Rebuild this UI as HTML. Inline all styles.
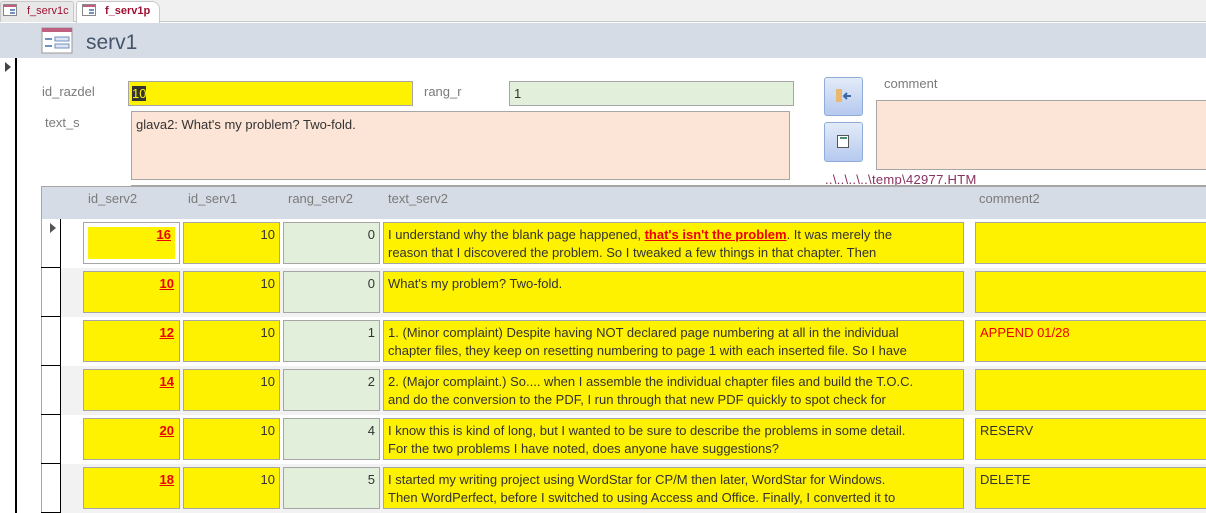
<!DOCTYPE html><html><head><style>
*{box-sizing:border-box;margin:0;padding:0}
body{width:1206px;height:513px;overflow:hidden;background:#fff;font-family:"Liberation Sans",sans-serif;font-size:13px;color:#333;position:relative}
.a{position:absolute}
.lbl{position:absolute;color:#7a7a7a;font-size:13px}
.box{position:absolute;border:1px solid #a6a6a6}
.y{background:#fff200}.g{background:#e2efda}.p{background:#fce4d6}
.cell{position:absolute;border:1px solid #a6a6a6;padding:3px 4px;line-height:18px;overflow:hidden}
.r{text-align:right}
.red{color:#e00;font-weight:bold;text-decoration:underline}
</style></head><body>
<div class="a" style="left:0;top:0;width:1206px;height:22px;background:#f0f0f0;border-bottom:1px solid #c8c8c8"></div>
<div class="a" style="left:0;top:1px;width:74px;height:21px;background:#e8e8e8;border:1px solid #c8c8c8;border-bottom:none;border-radius:3px 3px 0 0"></div>
<div class="a" style="left:76px;top:1px;width:84px;height:22px;background:#fff;border:1px solid #c8c8c8;border-bottom:none;border-radius:3px 8px 0 0"></div>
<svg class="a" style="left:3px;top:4px" width="14" height="12"><rect x="0.5" y="0.5" width="13" height="11" fill="#fff" stroke="#888"/><rect x="1" y="1" width="12" height="2" fill="#c06080"/><rect x="7" y="5" width="5" height="2" fill="#7090c0"/><rect x="7" y="8" width="5" height="2" fill="#7090c0"/></svg>
<div class="a" style="left:27px;top:5px;color:#a01030;font-size:11px">f_serv1c</div>
<svg class="a" style="left:82px;top:4px" width="14" height="12"><rect x="0.5" y="0.5" width="13" height="11" fill="#fff" stroke="#888"/><rect x="1" y="1" width="12" height="2" fill="#c06080"/><rect x="7" y="5" width="5" height="2" fill="#7090c0"/><rect x="7" y="8" width="5" height="2" fill="#7090c0"/></svg>
<div class="a" style="left:105px;top:5px;color:#a01030;font-size:11px;font-weight:bold">f_serv1p</div>
<div class="a" style="left:0;top:23px;width:1206px;height:35px;background:#d6dce5"></div>
<svg class="a" style="left:41px;top:27px" width="32" height="27"><rect x="1" y="1" width="30" height="25" fill="#fff" stroke="#999"/><rect x="1" y="1" width="30" height="4" fill="#c06080"/><rect x="14" y="10" width="14" height="4" fill="#dde6f2" stroke="#7090c0"/><rect x="14" y="17" width="14" height="4" fill="#dde6f2" stroke="#7090c0"/><rect x="4" y="11" width="7" height="2" fill="#7090c0"/><rect x="4" y="18" width="7" height="2" fill="#7090c0"/></svg>
<div class="a" style="left:86px;top:31px;font-size:21px;color:#44546a">serv1</div>
<div class="a" style="left:15px;top:58px;width:2px;height:455px;background:#000"></div>
<div class="a" style="left:5px;top:62px;width:0;height:0;border-left:6px solid #444;border-top:5px solid transparent;border-bottom:5px solid transparent"></div>
<div class="lbl" style="left:42px;top:84px">id_razdel</div>
<div class="box y" style="left:128px;top:81px;width:285px;height:25px;padding:4px 3px"><span style="background:#333;color:#fff200">10</span></div>
<div class="lbl" style="left:424px;top:84px">rang_r</div>
<div class="box g" style="left:509px;top:81px;width:285px;height:25px;padding:4px 4px">1</div>
<div class="lbl" style="left:45px;top:115px">text_s</div>
<div class="box p" style="left:131px;top:111px;width:659px;height:69px;padding:5px 4px">glava2: What's my problem? Two-fold.</div>
<div class="a" style="left:824px;top:77px;width:39px;height:39px;border:1px solid #8fadd8;border-radius:3px;background:linear-gradient(#e3ebf8,#b5c9ef)"></div>
<svg class="a" style="left:835px;top:87px" width="18" height="18"><rect x="1" y="2" width="6" height="13" fill="#e8b870"/><path d="M16 9H9M12 6L9 9L12 12" stroke="#3a66a8" stroke-width="2" fill="none"/></svg>
<div class="a" style="left:824px;top:122px;width:39px;height:40px;border:1px solid #8fadd8;border-radius:3px;background:linear-gradient(#e3ebf8,#b5c9ef)"></div>
<svg class="a" style="left:836px;top:134px" width="14" height="16"><rect x="1.5" y="1.5" width="11" height="12" fill="#fff" stroke="#555"/><rect x="4" y="3" width="7" height="2" fill="#4a9070"/></svg>
<div class="lbl" style="left:884px;top:76px">comment</div>
<div class="box p" style="left:876px;top:100px;width:340px;height:70px"></div>
<div class="a" style="left:825px;top:172px;color:#8a3060;text-decoration:underline;font-size:13px;letter-spacing:0.3px">..\..\..\..\temp\42977.HTM</div>
<div class="a" style="left:131px;top:185px;width:1075px;height:1px;background:#a6a6a6"></div>
<div class="a" style="left:41px;top:186px;width:1165px;height:33px;background:#d6dce5;border-left:1px solid #a6a6a6;border-top:1px solid #a6a6a6"></div>
<div class="lbl" style="left:88px;top:191px">id_serv2</div>
<div class="lbl" style="left:188px;top:191px">id_serv1</div>
<div class="lbl" style="left:288px;top:191px">rang_serv2</div>
<div class="lbl" style="left:388px;top:191px">text_serv2</div>
<div class="lbl" style="left:979px;top:191px">comment2</div>
<div class="a" style="left:41px;top:219px;width:1px;height:294px;background:#a6a6a6"></div>
<div class="a" style="left:60px;top:219px;width:1px;height:294px;background:#000"></div>
<div class="a" style="left:50px;top:223px;width:0;height:0;border-left:6px solid #555;border-top:5px solid transparent;border-bottom:5px solid transparent"></div>
<div id="rows"></div>
<script>
var d=[["16","10","0","I understand why the blank page happened, <span class='red'>that's isn't the problem</span>. It was merely the reason that I discovered the problem. So I tweaked a few things in that chapter. Then",""],
["10","10","0","What's my problem? Two-fold.",""],
["12","10","1","1. (Minor complaint) Despite having NOT declared page numbering at all in the individual chapter files, they keep on resetting numbering to page 1 with each inserted file. So I have","<span style='color:#e00'>APPEND 01/28</span>"],
["14","10","2","2. (Major complaint.) So.... when I assemble the individual chapter files and build the T.O.C. and do the conversion to the PDF, I run through that new PDF quickly to spot check for",""],
["20","10","4","I know this is kind of long, but I wanted to be sure to describe the problems in some detail. For the two problems I have noted, does anyone have suggestions?","RESERV"],
["18","10","5","I started my writing project using WordStar for CP/M then later, WordStar for Windows. Then WordPerfect, before I switched to using Access and Office. Finally, I converted it to","DELETE"]];
var h="";
d.forEach(function(r,i){var t=219+i*49;
if(i%2)h+="<div class='a' style='left:61px;top:"+t+"px;width:1145px;height:49px;background:#f2f2f2'></div>";
h+="<div class='a' style='left:41px;top:"+(t+48)+"px;width:20px;height:1px;background:#000'></div>";
h+="<div class='cell y r' style='left:83px;top:"+(t+3)+"px;width:97px;height:42px;"+(i==0?"box-shadow:inset 0 0 0 4px #fff;":"")+"padding-right:"+(i==0?8:5)+"px'><span class='red'>"+r[0]+"</span></div>";
h+="<div class='cell y r' style='left:183px;top:"+(t+3)+"px;width:97px;height:42px'>"+r[1]+"</div>";
h+="<div class='cell g r' style='left:283px;top:"+(t+3)+"px;width:97px;height:42px'>"+r[2]+"</div>";
h+="<div class='cell y' style='left:383px;top:"+(t+3)+"px;width:581px;height:42px;padding-right:48px'>"+r[3]+"</div>";
h+="<div class='cell y' style='left:975px;top:"+(t+3)+"px;width:240px;height:42px'>"+r[4]+"</div>";});
document.getElementById("rows").innerHTML=h;
</script>
</body></html>
